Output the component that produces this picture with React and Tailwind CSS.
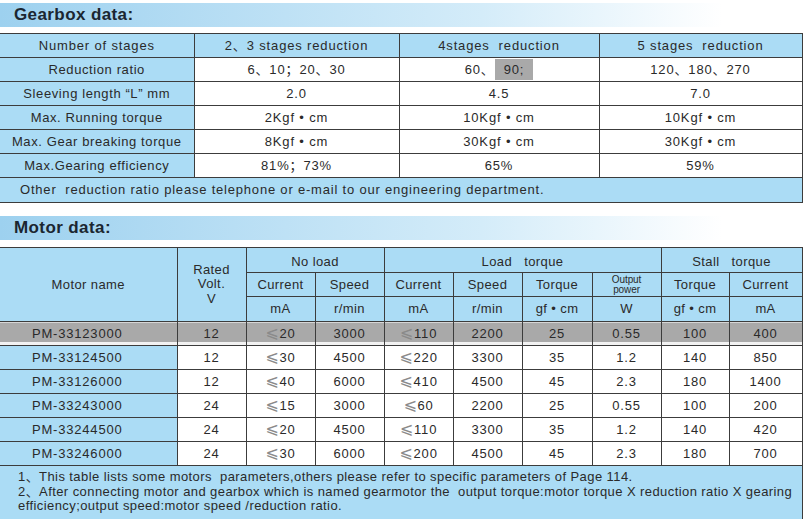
import React from 'react';

const font = { fontFamily: '"Liberation Sans", Arial, "Noto Sans CJK SC", sans-serif' };

const gearRows = [
    ['Reduction ratio', '6、10；20、30', 'hl', '120、180、270'],
    ['Sleeving length “L” mm', '2.0', '4.5', '7.0'],
    ['Max. Running  torque', '2Kgf • cm', '10Kgf • cm', '10Kgf • cm'],
    ['Max. Gear  breaking torque', '8Kgf • cm', '30Kgf • cm', '30Kgf • cm'],
    ['Max.Gearing efficiency', '81%；73%', '65%', '59%'],
];

const motorRows = [
    ['PM-33123000', '12', '20', '3000', '110', '2200', '25', '0.55', '100', '400'],
    ['PM-33124500', '12', '30', '4500', '220', '3300', '35', '1.2', '140', '850'],
    ['PM-33126000', '12', '40', '6000', '410', '4500', '45', '2.3', '180', '1400'],
    ['PM-33243000', '24', '15', '3000', '60', '2200', '25', '0.55', '100', '200'],
    ['PM-33244500', '24', '20', '4500', '110', '3300', '35', '1.2', '140', '420'],
    ['PM-33246000', '24', '30', '6000', '200', '4500', '45', '2.3', '180', '700'],
];

function Banner({ title }) {
    return (
        <div className="h-[24px] w-[803px] flex items-center pl-[14px] bg-gradient-to-r from-[#9dd1ef] via-[#d4ecf9] via-60% to-white to-90%">
            <span className="text-[17px] font-bold tracking-[0.4px] text-[#1b2631]">{title}</span>
        </div>
    );
}

// slanted "less or equal" sign, grey like the print
function Le({ v }) {
    return (
        <span>
            <span className="text-[#8a8a8a] text-[16px] leading-none" style={{ fontFamily: '"DejaVu Sans", sans-serif' }}>⩽</span>
            {v}
        </span>
    );
}

const cell = 'border border-[#3c3c3c] text-center align-middle p-0';

function GearboxTable() {
    return (
        <table className="table-fixed border-collapse w-[802px] text-[13px] tracking-[0.85px] text-[#2a2a2a]">
            <colgroup>
                <col className="w-[194px]" />
                <col className="w-[205px]" />
                <col className="w-[200px]" />
                <col className="w-[203px]" />
            </colgroup>
            <tbody>
                <tr className="h-[24px] bg-[#abdcf5]">
                    <td className={`${cell} border-l-0`}>Number of stages</td>
                    <td className={cell}>2、3 stages reduction</td>
                    <td className={cell}>4stages&nbsp; reduction</td>
                    <td className={cell}>5 stages&nbsp; reduction</td>
                </tr>
                {gearRows.map((row, i) => (
                    <tr key={i} className="h-[24px]">
                        <td className={`${cell} border-l-0 bg-[#abdcf5] tracking-[0.6px]`}>{row[0]}</td>
                        <td className={`${cell} bg-white`}>{row[1]}</td>
                        <td className={`${cell} bg-white`}>
                            {row[2] === 'hl' ? (
                                <span>60、<span className="bg-[#a9a9a9] px-[9px] py-[3px]">90;</span></span>
                            ) : row[2]}
                        </td>
                        <td className={`${cell} bg-white`}>{row[3]}</td>
                    </tr>
                ))}
                <tr className="h-[25px] bg-[#abdcf5]">
                    <td colSpan={4} className={`${cell} border-l-0 text-left pl-[20px] tracking-[0.8px]`}>
                        Other&nbsp; reduction ratio please telephone or e-mail to our engineering department.
                    </td>
                </tr>
            </tbody>
        </table>
    );
}

function MotorTable() {
    return (
        <table className="table-fixed border-collapse w-[802px] text-[13px] tracking-[0.4px] text-[#2a2a2a]">
            <colgroup>
                <col className="w-[177px]" />
                <col className="w-[69px]" />
                <col className="w-[69px]" />
                <col className="w-[69px]" />
                <col className="w-[69px]" />
                <col className="w-[69px]" />
                <col className="w-[70px]" />
                <col className="w-[69px]" />
                <col className="w-[68px]" />
                <col className="w-[73px]" />
            </colgroup>
            <tbody>
                <tr className="h-[25px] bg-[#abdcf5]">
                    <td rowSpan={3} className={`${cell} border-l-0`}>Motor name</td>
                    <td rowSpan={3} className={`${cell} leading-[14.5px]`}>Rated<br />Volt.<br />V</td>
                    <td colSpan={2} className={`${cell} pt-[3px]`}>No load</td>
                    <td colSpan={4} className={`${cell} pt-[3px]`}>Load&nbsp;&nbsp; torque</td>
                    <td colSpan={2} className={`${cell} pt-[3px]`}>Stall&nbsp;&nbsp; torque</td>
                </tr>
                <tr className="h-[24px] bg-[#abdcf5]">
                    <td className={cell}>Current</td>
                    <td className={cell}>Speed</td>
                    <td className={cell}>Current</td>
                    <td className={cell}>Speed</td>
                    <td className={cell}>Torque</td>
                    <td className={`${cell} text-[10px] leading-[9.5px] tracking-[-0.1px]`}>Output<br />power</td>
                    <td className={cell}>Torque</td>
                    <td className={cell}>Current</td>
                </tr>
                <tr className="h-[25px] bg-[#abdcf5]">
                    <td className={cell}>mA</td>
                    <td className={cell}>r/min</td>
                    <td className={cell}>mA</td>
                    <td className={cell}>r/min</td>
                    <td className={cell}>gf • cm</td>
                    <td className={cell}>W</td>
                    <td className={cell}>gf • cm</td>
                    <td className={cell}>mA</td>
                </tr>
                {motorRows.map((row, i) => {
                    const gray = i === 0;
                    const bg = gray ? 'bg-[#a9a9a9]' : 'bg-white';
                    const sh = gray ? 'shadow-[inset_0_1px_0_#d6d6d6,inset_0_-3px_0_#f2f2f2]' : '';
                    return (
                        <tr key={row[0]} className="h-[24px] tracking-[0.8px]">
                            <td className={`${cell} border-l-0 text-left pl-[32px] ${gray ? 'bg-[#a9a9a9]' : 'bg-[#abdcf5]'} ${sh}`}>{row[0]}</td>
                            {row.slice(1).map((v, j) => (
                                <td key={j} className={`${cell} ${bg} ${sh}`}>
                                    {j === 1 || j === 3 ? <Le v={v} /> : v}
                                </td>
                            ))}
                        </tr>
                    );
                })}
                <tr className="bg-[#abdcf5]">
                    <td colSpan={10} className={`${cell} border-l-0 border-b-0 text-left align-top pl-[18px] pt-[4px] pb-[14px] leading-[14.5px] tracking-[0.42px]`}>
                        1、This table lists some motors&nbsp; parameters,others please refer to specific parameters of Page 114.<br />
                        2、After connecting motor and gearbox which is named gearmotor the&nbsp; output torque:motor torque X reduction ratio X gearing<br />
                        efficiency;output speed:motor speed /reduction ratio.
                    </td>
                </tr>
            </tbody>
        </table>
    );
}

export default function App() {
    return (
        <div className="w-[803px] h-[519px] overflow-hidden bg-white" style={font}>
            <div className="pt-[3px]">
                <Banner title="Gearbox data:" />
            </div>
            <div className="pt-[6px]">
                <GearboxTable />
            </div>
            <div className="pt-[13px]">
                <Banner title="Motor data:" />
            </div>
            <div className="pt-[7px]">
                <MotorTable />
            </div>
        </div>
    );
}
